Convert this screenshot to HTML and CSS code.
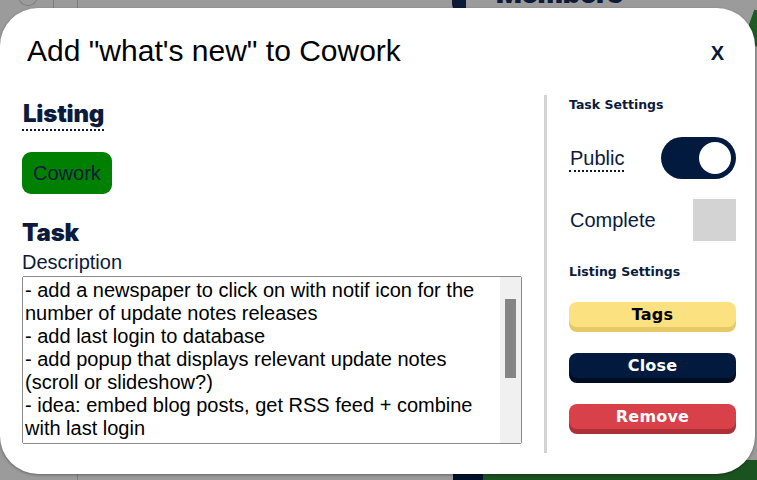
FILE: index.html
```html
<!DOCTYPE html>
<html>
<head>
<meta charset="utf-8">
<link rel="stylesheet" href="styles.css">
</head>
<body>
<div class="page">
  <div class="bg-circle"></div>
  <div class="bg-line bg-line-a"></div>
  <div class="bg-line bg-line-b"></div>
  <div class="bg-line bg-line-c"></div>
  <div class="bg-navy-top"></div>
  <div class="bg-members">Members</div>
  <div class="bg-green-corner"></div>
  <div class="bg-bottom-navy"></div>
  <div class="bg-bottom-green"></div>

  <div class="modal">
    <div class="modal-head">
      <h1 class="modal-title">Add "what's new" to Cowork</h1>
      <button class="close-x">X</button>
    </div>
    <div class="modal-body">
      <div class="main-col">
        <h2 class="heading heading-listing"><span class="dotted">Listing</span></h2>
        <button class="chip-green">Cowork</button>
        <h2 class="heading heading-task">Task</h2>
        <label class="field-label" for="desc">Description</label>
        <div class="textbox">
          <textarea id="desc" class="desc">- add a newspaper to click on with notif icon for the number of update notes releases
- add last login to database
- add popup that displays relevant update notes (scroll or slideshow?)
- idea: embed blog posts, get RSS feed + combine with last login</textarea>
          <div class="scrollbar"><div class="thumb"></div></div>
        </div>
      </div>
      <div class="divider"></div>
      <div class="side-col">
        <h3 class="small-heading small-heading-task">Task Settings</h3>
        <div class="setting-row setting-public">
          <span class="setting-label dotted-label">Public</span>
          <div class="toggle"><div class="knob"></div></div>
        </div>
        <div class="setting-row setting-complete">
          <span class="setting-label">Complete</span>
          <div class="check-box"></div>
        </div>
        <h3 class="small-heading small-heading-listing">Listing Settings</h3>
        <button class="btn btn-tags">Tags</button>
        <button class="btn btn-close">Close</button>
        <button class="btn btn-remove">Remove</button>
      </div>
    </div>
  </div>
</div>
</body>
</html>
```
FILE: styles.css
```css
* { box-sizing: border-box; }
html, body { margin: 0; padding: 0; }
body {
  width: 757px;
  height: 480px;
  overflow: hidden;
  background: #9b9b9b;
  font-family: "Liberation Sans", Arial, sans-serif;
}
.page {
  position: relative;
  width: 757px;
  height: 480px;
  overflow: hidden;
  background: #9b9b9b;
}

/* underlying page, dimmed */
.bg-circle {
  position: absolute;
  left: 17px; top: -20px;
  width: 22px; height: 26px;
  border: 1px solid #7e7e7e;
  border-radius: 50%;
}
.bg-line {
  position: absolute;
  width: 1px;
  background: #7e7e7e;
}
.bg-line-a { left: 53px; top: 0; height: 10px; }
.bg-line-b { left: 77px; top: 0; height: 10px; }
.bg-line-c { left: 77px; top: 470px; height: 10px; }
.bg-navy-top {
  position: absolute;
  left: 452px; top: -4px;
  width: 14px; height: 16px;
  background: #0b1a36;
  border-radius: 0 0 2px 8px;
}
.bg-members {
  position: absolute;
  left: 496px; top: -22px;
  font-family: "Inter", sans-serif;
  font-weight: 900;
  font-size: 27px;
  line-height: 32px;
  color: #0b1a36;
  letter-spacing: -0.3px;
}
.bg-green-corner {
  position: absolute;
  left: 748px; top: 12px;
  width: 20px; height: 34px;
  background: #1d5a24;
  transform: rotate(20deg);
}
.bg-bottom-navy {
  position: absolute;
  left: 453px; top: 460px;
  width: 30px; height: 20px;
  background: #00122b;
}
.bg-bottom-green {
  position: absolute;
  left: 483px; top: 460px;
  width: 274px; height: 20px;
  background: #1b5320;
}

/* modal */
.modal {
  position: absolute;
  left: 0; top: 8px;
  width: 755px;
  height: 466px;
  background: #ffffff;
  border-radius: 38px;
  box-shadow: 0 1px 3px rgba(0,0,0,0.35);
}
.modal-head {
  display: flex;
  align-items: center;
  justify-content: space-between;
  padding: 25px 31px 0 27px;
}
.modal-title {
  margin: 0;
  font-family: "Liberation Sans", Arial, sans-serif;
  font-weight: 400;
  font-size: 30px;
  line-height: 36px;
  color: #000;
}
.close-x {
  border: 0;
  background: none;
  padding: 0;
  font-family: "Liberation Sans", Arial, sans-serif;
  font-weight: 700;
  font-size: 20px;
  line-height: 24px;
  color: #06173a;
  margin-top: 4px;
}
.modal-body {
  display: flex;
  margin-top: 26px;
}
.main-col {
  width: 500px;
  margin-left: 22px;
  display: flex;
  flex-direction: column;
  align-items: flex-start;
}
.heading {
  margin: 0;
  font-family: "Inter", sans-serif;
  font-weight: 900;
  font-size: 24px;
  line-height: 30px;
  color: #0c1a3c;
  letter-spacing: -0.2px;
}
.heading-listing { margin-top: 4px; }
.dotted {
  display: inline-block;
  border-bottom: 2px dotted #0c1a3c;
  padding-left: 1px;
}
.chip-green {
  margin-top: 21px;
  border: 0;
  background: #008000;
  border-radius: 9px;
  padding: 10px 11px;
  font-family: "Liberation Sans", Arial, sans-serif;
  font-size: 20px;
  line-height: 22px;
  color: #0c1a3c;
}
.heading-task { margin-top: 24px; }
.field-label {
  margin-top: 3px;
  font-size: 20px;
  line-height: 23px;
  color: #0c1a3c;
}
.textbox {
  margin-top: 2px;
  width: 500px;
  height: 168px;
  border: 1px solid #8a8a8a;
  border-radius: 2px;
  display: flex;
  background: #fff;
}
.desc {
  flex: 1;
  min-width: 0;
  height: 100%;
  border: 0;
  padding: 2px;
  resize: none;
  overflow: hidden;
  font-family: "Liberation Sans", Arial, sans-serif;
  font-size: 20px;
  line-height: 23px;
  color: #000;
  background: #fff;
  outline: none;
}
.scrollbar {
  width: 21px;
  height: 100%;
  background: #f0f0f0;
  padding: 22px 5px 0 5px;
}
.thumb {
  width: 11px;
  height: 79px;
  background: #858585;
}
.divider {
  margin-left: 22px;
  width: 3px;
  height: 358px;
  background: #d3d3d3;
}
.side-col {
  width: 167px;
  margin-left: 22px;
  display: flex;
  flex-direction: column;
}
.small-heading {
  margin: 0;
  font-family: "DejaVu Sans", sans-serif;
  font-weight: 700;
  font-size: 12.5px;
  line-height: 16px;
  color: #0c1a3c;
  letter-spacing: 0;
}
.small-heading-task { margin-top: 2px; }
.setting-row {
  display: flex;
  align-items: center;
  justify-content: space-between;
}
.setting-public { margin-top: 24px; height: 42px; }
.setting-complete { margin-top: 20px; height: 42px; }
.setting-label {
  font-size: 20px;
  line-height: 23px;
  color: #0c1a3c;
  padding-left: 1px;
}
.dotted-label {
  display: inline-block;
  border-bottom: 2px dotted #0c1a3c;
  margin-top: 2px;
}
.toggle {
  width: 75px;
  height: 42px;
  border-radius: 21px;
  background: #011a3e;
  display: flex;
  align-items: center;
  justify-content: flex-end;
  padding-right: 5px;
}
.knob {
  width: 32px;
  height: 32px;
  border-radius: 50%;
  background: #fff;
}
.check-box {
  width: 43px;
  height: 42px;
  background: #d3d3d3;
}
.small-heading-listing { margin-top: 23px; }
.btn {
  height: 25px;
  border: 0;
  border-radius: 8px;
  padding: 0;
  font-family: "DejaVu Sans", sans-serif;
  font-weight: 700;
  font-size: 16px;
  line-height: 25px;
  letter-spacing: 0.2px;
  text-align: center;
}
.btn-tags {
  margin-top: 22px;
  background: #fbe180;
  color: #000;
  box-shadow: 0 5px 0 #e6c867;
}
.btn-close {
  margin-top: 26px;
  background: #011a3e;
  color: #fff;
  box-shadow: 0 5px 0 #000d22;
}
.btn-remove {
  margin-top: 26px;
  background: #d8404a;
  color: #fff;
  box-shadow: 0 5px 0 #ae3037;
}
```
